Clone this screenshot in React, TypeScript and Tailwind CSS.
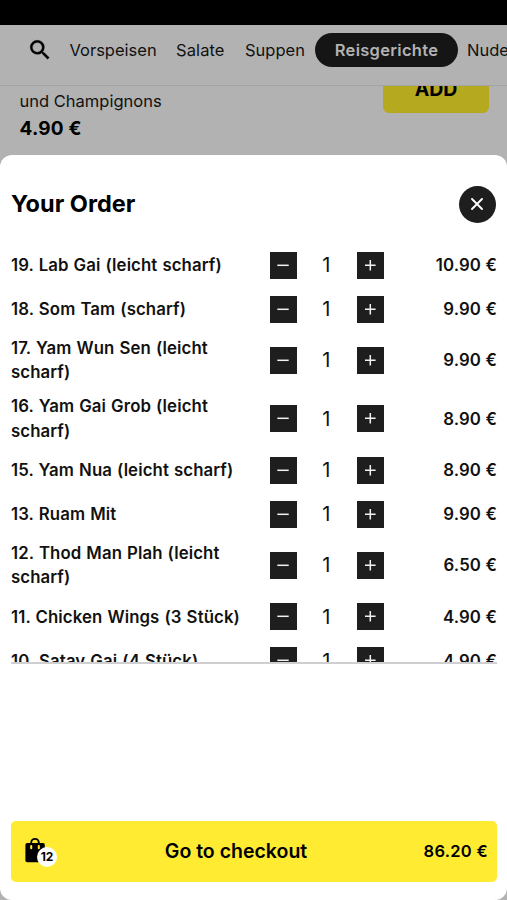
import React from "react";

type Item = { name: React.ReactNode; price: string; tall?: boolean };

const items: Item[] = [
  { name: "19. Lab Gai (leicht scharf)", price: "10.90 €" },
  { name: "18. Som Tam (scharf)", price: "9.90 €" },
  { name: <>17. Yam Wun Sen (leicht<br />scharf)</>, price: "9.90 €", tall: true },
  { name: <>16. Yam Gai Grob (leicht<br />scharf)</>, price: "8.90 €", tall: true },
  { name: "15. Yam Nua (leicht scharf)", price: "8.90 €" },
  { name: "13. Ruam Mit", price: "9.90 €" },
  { name: <>12. Thod Man Plah (leicht<br />scharf)</>, price: "6.50 €", tall: true },
  { name: "11. Chicken Wings (3 Stück)", price: "4.90 €" },
  { name: "10. Satay Gai (4 Stück)", price: "4.90 €" },
];

function StepButton({ plus }: { plus?: boolean }) {
  return (
    <button aria-label={plus ? "Add one" : "Remove one"} className="flex size-[27px] shrink-0 items-center justify-center bg-[#1e1e1e]">
      <svg viewBox="0 0 27 27" className="size-[27px]" stroke="#f2f2f2" strokeWidth="1.5" fill="none">
        <path d={plus ? "M8 13.3H18.6M13.3 8V18.6" : "M7.3 13.3H18.7"} />
      </svg>
    </button>
  );
}

function OrderRow({ item }: { item: Item }) {
  return (
    <li className={`flex shrink-0 items-center text-[16.8px] font-semibold leading-[24.4px] ${item.tall ? "h-[58.6px]" : "h-[44px]"}`}>
      <span className="w-[259px] shrink-0 whitespace-nowrap tracking-[0.1px] [word-spacing:0.7px]">{item.name}</span>
      <StepButton />
      <span className="w-[59.5px] shrink-0 pr-px text-center text-[20px] font-normal">1</span>
      <StepButton plus />
      <span className="flex-1 text-right tracking-[0.15px]">{item.price}</span>
    </li>
  );
}

export default function App() {
  return (
    <div className="flex h-[900px] w-[507px] flex-col overflow-hidden bg-[#b2b2b2] font-['Inter','Liberation_Sans',sans-serif] text-[#111111]">
      <div className="h-[25px] shrink-0 bg-black" />
      <nav className="flex h-[61px] shrink-0 items-start overflow-hidden border-b border-[#a4a4a4] pt-[7px] pl-[27px] text-[16.5px] leading-[36px] whitespace-nowrap">
        <svg viewBox="0 0 24 24" className="mt-[5px] size-[26px] shrink-0" fill="black" stroke="black" strokeWidth=".35">
          <path d="M15.5 14h-.79l-.28-.27A6.471 6.471 0 0 0 16 9.5 6.5 6.5 0 1 0 9.5 16c1.61 0 3.09-.59 4.23-1.57l.27.28v.79l5 4.99L20.49 19l-4.99-5zm-6 0C7.01 14 5 11.99 5 9.5S7.01 5 9.5 5 14 7.01 14 9.5 11.99 14 9.5 14z" />
        </svg>
        <span className="ml-[16.5px] w-[106.5px] shrink-0">Vorspeisen</span>
        <span className="w-[69px] shrink-0 tracking-[0.1px]">Salate</span>
        <span className="w-[70px] shrink-0">Suppen</span>
        <span className="mt-px h-[34px] w-[143px] shrink-0 rounded-full bg-[#151515] text-center font-semibold leading-[34px] tracking-[0.3px] text-[#b2b2b2]">Reisgerichte</span>
        <span className="ml-[9px] shrink-0">Nudelgerichte</span>
      </nav>
      <div className="flex h-[69px] shrink-0 items-start justify-between overflow-hidden pr-[18px] pl-[19.5px]">
        <div className="pt-[3px]">
          <p className="text-[16.5px] leading-[24px]">und Champignons</p>
          <p className="mt-[2px] text-[19px] font-bold leading-[27px] tracking-[0.2px] text-black">4.90 €</p>
        </div>
        <div className="-mt-[19px] flex h-[46px] w-[106px] items-center justify-center rounded-[6px] bg-[#b5a91f] text-[19.5px] font-bold text-black">ADD</div>
      </div>
      <main className="flex h-[745px] shrink-0 flex-col rounded-[12px] bg-white pr-[10px] pl-[11px]">
        <header className="flex h-[88px] shrink-0 items-center justify-between pt-[10px]">
          <h1 className="text-[23.5px] font-bold text-black">Your Order</h1>
          <button aria-label="Close" className="mr-px flex size-[37px] items-center justify-center rounded-full bg-[#1e1e1e]">
            <svg viewBox="0 0 12 12" className="-ml-px size-[12px]" stroke="white" strokeWidth="1.9" fill="none" strokeLinecap="round">
              <path d="M1 1L11 11M11 1L1 11" />
            </svg>
          </button>
        </header>
        <ul className="flex h-[421px] shrink-0 flex-col overflow-hidden border-b-2 border-[#cfcfd1]">
          {items.map((item, i) => (
            <OrderRow key={i} item={item} />
          ))}
        </ul>
        <div className="flex-1" />
        <button className="mb-[18.5px] flex h-[61px] shrink-0 items-center rounded-[5px] bg-[#ffec32] pr-[9px] pl-[13px] text-black">
          <span className="relative size-[34px] shrink-0">
            <svg viewBox="0 0 34 34" className="size-[34px]">
              <path d="M7.2 10V8.7a3.8 3.8 0 0 1 7.6 0V10" fill="none" stroke="black" strokeWidth="1.9" />
              <rect x="1.4" y="9" width="19.4" height="19.2" rx="1.8" fill="black" />
              <path d="M7.2 12.1v2.1M14.8 12.1v2.1" stroke="#ffec32" strokeWidth="2.1" strokeLinecap="round" />
            </svg>
            <span className="absolute top-[12.5px] left-[13px] flex size-[20px] items-center justify-center rounded-full bg-white text-[12px] font-bold">12</span>
          </span>
          <span className="flex-1 pt-px pl-[5px] text-center text-[19.5px] font-semibold">Go to checkout</span>
          <span className="w-[79px] text-right text-[16.5px] font-semibold tracking-[0.3px]">86.20 €</span>
        </button>
      </main>
    </div>
  );
}
